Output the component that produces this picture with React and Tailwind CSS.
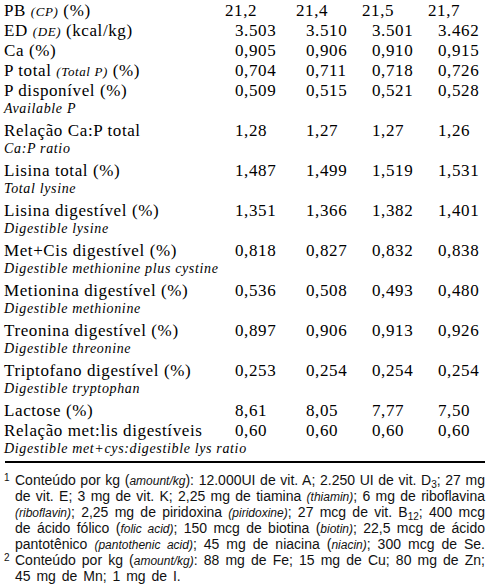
import React from 'react'

const serif = { fontFamily: '"Liberation Serif", "Times New Roman", serif' }

// main rows have values; sub rows are the english italic caption under them
const rows = [
    { label: <>PB <i className="text-[13px]">(CP)</i> (%)</>, vals: ['21,2', '21,4', '21,5', '21,7'], head: true },
    { label: <>ED <i className="text-[13px]">(DE)</i> (kcal/kg)</>, vals: ['3.503', '3.510', '3.501', '3.462'] },
    { label: 'Ca (%)', vals: ['0,905', '0,906', '0,910', '0,915'] },
    { label: <>P total <i className="text-[13px]">(Total P)</i> (%)</>, vals: ['0,704', '0,711', '0,718', '0,726'] },
    { label: 'P disponível (%)', vals: ['0,509', '0,515', '0,521', '0,528'] },
    { sub: 'Available P' },
    { label: 'Relação Ca:P total', vals: ['1,28', '1,27', '1,27', '1,26'] },
    { sub: 'Ca:P ratio' },
    { label: 'Lisina total (%)', vals: ['1,487', '1,499', '1,519', '1,531'] },
    { sub: 'Total lysine' },
    { label: 'Lisina digestível (%)', vals: ['1,351', '1,366', '1,382', '1,401'] },
    { sub: 'Digestible lysine' },
    { label: 'Met+Cis digestível (%)', vals: ['0,818', '0,827', '0,832', '0,838'] },
    { sub: 'Digestible methionine plus cystine' },
    { label: 'Metionina digestível (%)', vals: ['0,536', '0,508', '0,493', '0,480'] },
    { sub: 'Digestible methionine' },
    { label: 'Treonina digestível (%)', vals: ['0,897', '0,906', '0,913', '0,926'] },
    { sub: 'Digestible threonine' },
    { label: 'Triptofano digestível (%)', vals: ['0,253', '0,254', '0,254', '0,254'] },
    { sub: 'Digestible tryptophan' },
    { label: 'Lactose (%)', vals: ['8,61', '8,05', '7,77', '7,50'] },
    { label: 'Relação met:lis digestíveis', vals: ['0,60', '0,60', '0,60', '0,60'] },
    { sub: 'Digestible met+cys:digestible lys ratio' },
]

const It = ({ children }) => <i className="text-[12px]">{children}</i>

const Line = ({ children, last }) => (
    <div className={'h-[16px] leading-[16px] whitespace-nowrap ' + (last ? 'text-left [word-spacing:2px]' : 'text-justify [text-align-last:justify]')}>
        {children}
    </div>
)

const App = () => {
    return (
        <div className="w-[493px] h-[584px] bg-white text-black overflow-hidden">
            <div className="pl-[4px] pt-[1px]" style={serif}>
                {rows.map((row, i) => {
                    if (row.sub) {
                        return (
                            <div key={i} className="h-[20px] pb-[4px] text-[14px] leading-[16px] italic tracking-[0.65px]">
                                {row.sub}
                            </div>
                        )
                    }
                    return (
                        <div key={i} className="grid grid-cols-[231px_71px_66px_66px_1fr] h-[20px] text-[17px] leading-[20px] tracking-[0.6px] whitespace-nowrap">
                            <div>{row.label}</div>
                            {row.vals.map((v, j) => (
                                <div key={j} className={row.head ? '-ml-[10px]' : ''}>{v}</div>
                            ))}
                        </div>
                    )
                })}
            </div>
            <div className="ml-[5px] w-[480px] h-[2px] bg-black" />

            <div
                className="mt-[9px] text-[14px] text-[#111]"
                style={{ fontFamily: '"Liberation Sans", Arial, sans-serif' }}
            >
                <div className="flex">
                    <span className="w-[15px] pl-[4px] text-[10px] leading-[12px]">1</span>
                    <div className="w-[470px]">
                        <Line>Conteúdo por kg (<It>amount/kg</It>): 12.000UI de vit. A; 2.250 UI de vit. D<sub className="text-[10px]">3</sub>; 27 mg</Line>
                        <Line>de vit. E; 3 mg de vit. K; 2,25 mg de tiamina <It>(thiamin)</It>; 6 mg de riboflavina</Line>
                        <Line><It>(riboflavin)</It>; 2,25 mg de piridoxina <It>(piridoxine)</It>; 27 mcg de vit. B<sub className="text-[10px]">12</sub>; 400 mcg</Line>
                        <Line>de ácido fólico (<It>folic acid)</It>; 150 mcg de biotina (<It>biotin)</It>; 22,5 mcg de ácido</Line>
                        <Line>pantotênico <It>(pantothenic acid)</It>; 45 mg de niacina (<It>niacin)</It>; 300 mcg de Se.</Line>
                    </div>
                </div>
                <div className="flex">
                    <span className="w-[15px] pl-[4px] text-[10px] leading-[12px]">2</span>
                    <div className="w-[470px]">
                        <Line>Conteúdo por kg (<It>amount/kg)</It>: 88 mg de Fe; 15 mg de Cu; 80 mg de Zn;</Line>
                        <Line last>45 mg de Mn; 1 mg de I.</Line>
                    </div>
                </div>
            </div>
        </div>
    )
}

export default App
